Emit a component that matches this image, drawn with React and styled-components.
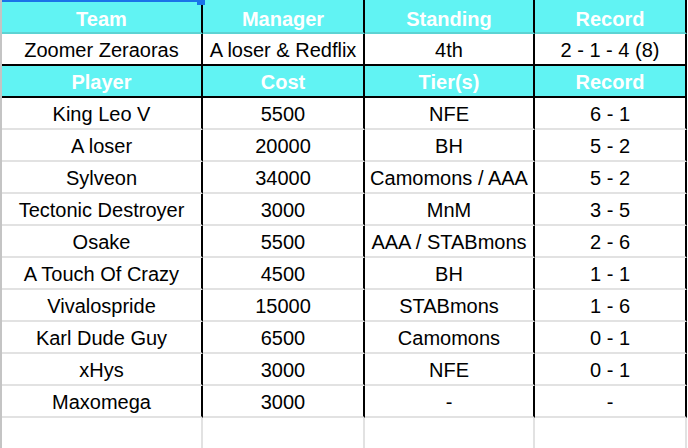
import React from "react";
import styled, { createGlobalStyle } from "styled-components";

const GlobalStyle = createGlobalStyle`
  body {
    margin: 0;
    background: #ffffff;
    overflow: hidden;
    font-family: "Liberation Sans", Arial, sans-serif;
  }
`;

const Sheet = styled.div`
  position: relative;
  width: 687px;
  border-left: 2px solid #c4c4c4;
`;

const Row = styled.div`
  display: grid;
  grid-template-columns: 201px 162px 170px 152px;
`;

const Cell = styled.div`
  box-sizing: border-box;
  height: ${({ $tall }) => ($tall ? "34px" : "32px")};
  padding-top: ${({ $tall }) => ($tall ? "6px" : "3px")};
  display: flex;
  align-items: center;
  justify-content: center;
  white-space: nowrap;
  font-size: 20px;
  font-weight: ${({ $head }) => ($head ? "bold" : "normal")};
  color: ${({ $head }) => ($head ? "#ffffff" : "#000000")};
  background: ${({ $head }) => ($head ? "#61f3f3" : "#ffffff")};
  border-right: 2px solid ${({ $faint }) => ($faint ? "#e2e2e2" : "#000000")};
  border-bottom: 2px solid ${({ $line }) => $line || "#e2e2e2"};
`;

const SelectLine = styled.div`
  position: absolute;
  top: 0;
  left: 0;
  width: 197px;
  height: 2px;
  background: #1a73e8;
`;

const SelectHandle = styled.div`
  position: absolute;
  top: 0;
  left: 195px;
  width: 8px;
  height: 5px;
  background: #1a73e8;
`;

const players = [
  ["King Leo V", "5500", "NFE", "6 - 1"],
  ["A loser", "20000", "BH", "5 - 2"],
  ["Sylveon", "34000", "Camomons / AAA", "5 - 2"],
  ["Tectonic Destroyer", "3000", "MnM", "3 - 5"],
  ["Osake", "5500", "AAA / STABmons", "2 - 6"],
  ["A Touch Of Crazy", "4500", "BH", "1 - 1"],
  ["Vivalospride", "15000", "STABmons", "1 - 6"],
  ["Karl Dude Guy", "6500", "Camomons", "0 - 1"],
  ["xHys", "3000", "NFE", "0 - 1"],
  ["Maxomega", "3000", "-", "-"],
];

export default function App() {
  return (
    <>
      <GlobalStyle />
      <Sheet>
        <Row>
          {["Team", "Manager", "Standing", "Record"].map((t) => (
            <Cell key={t} $head $tall $line="#5dd3d3">
              {t}
            </Cell>
          ))}
        </Row>
        <Row>
          {["Zoomer Zeraoras", "A loser & Redflix", "4th", "2 - 1 - 4 (8)"].map((t) => (
            <Cell key={t} $line="#000000">
              {t}
            </Cell>
          ))}
        </Row>
        <Row>
          {["Player", "Cost", "Tier(s)", "Record"].map((t) => (
            <Cell key={t} $head $line="#000000">
              {t}
            </Cell>
          ))}
        </Row>
        {players.map((p) => (
          <Row key={p[0]}>
            {p.map((t, i) => (
              <Cell key={i}>{t}</Cell>
            ))}
          </Row>
        ))}
        <Row>
          {[0, 1, 2, 3].map((i) => (
            <Cell key={i} $faint />
          ))}
        </Row>
        <SelectLine />
        <SelectHandle />
      </Sheet>
    </>
  );
}
